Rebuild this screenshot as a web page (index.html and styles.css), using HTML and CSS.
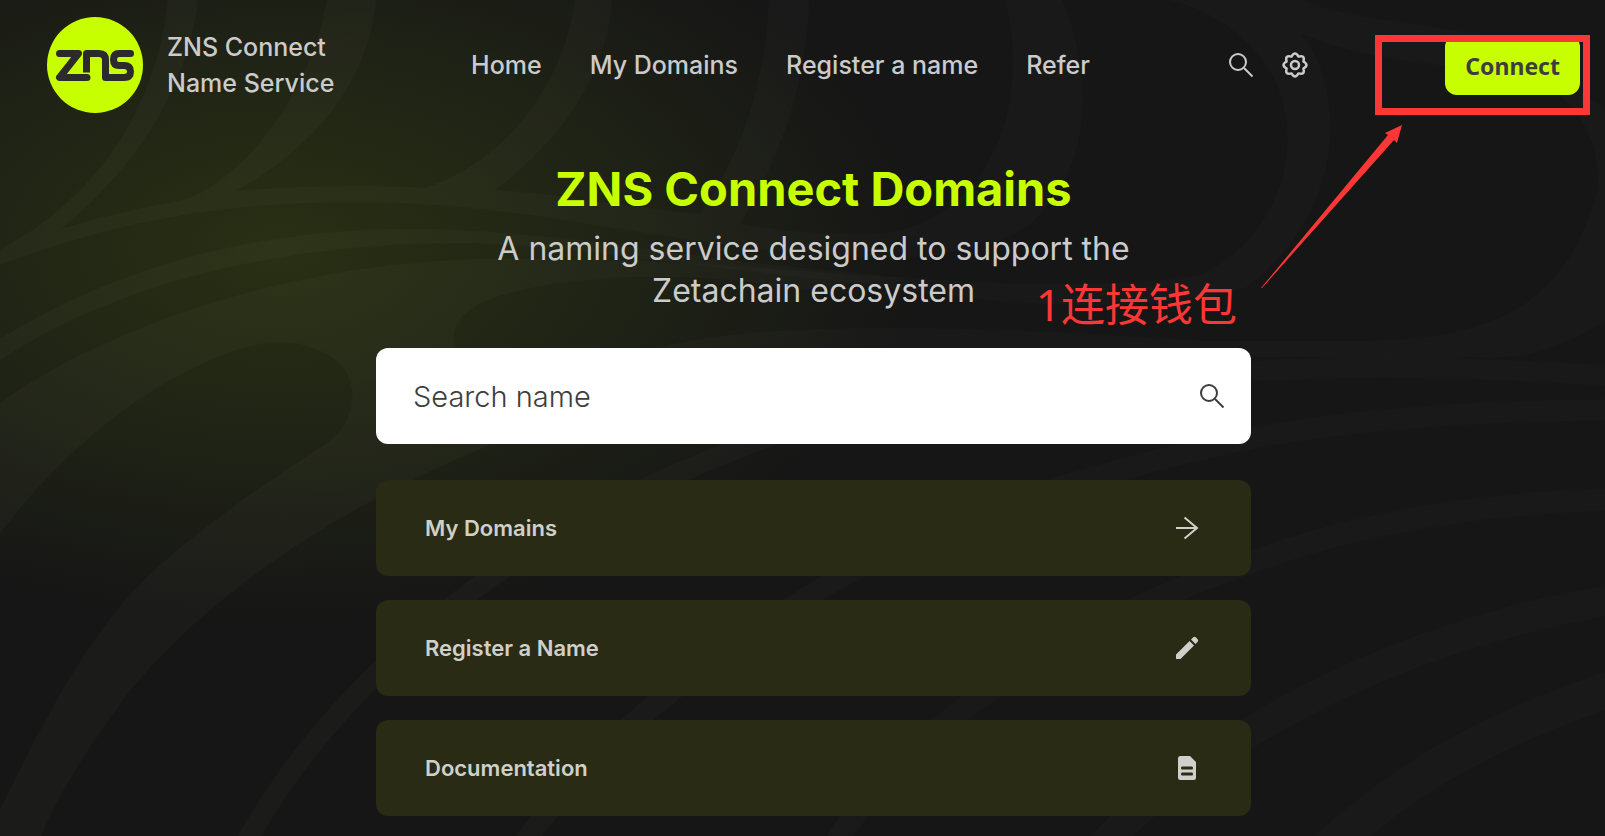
FILE: index.html
```html
<!DOCTYPE html>
<html lang="en">
<head>
  <meta charset="UTF-8">
  <meta name="viewport" content="width=device-width, initial-scale=1.0">
  <title>ZNS Connect Domains</title>
  <link rel="stylesheet" href="styles.css">
</head>
<body>
  <svg class="backdrop" viewBox="0 0 1605 836" preserveAspectRatio="xMidYMid slice" aria-hidden="true">
    <defs>
      <linearGradient id="fade" gradientUnits="userSpaceOnUse" x1="0" y1="0" x2="1605" y2="0">
        <stop offset="0" stop-color="#fff0d0" stop-opacity="0.024"/>
        <stop offset="0.3" stop-color="#fff0d0" stop-opacity="0.022"/>
        <stop offset="0.6" stop-color="#ffffff" stop-opacity="0.013"/>
        <stop offset="1" stop-color="#ffffff" stop-opacity="0.013"/>
      </linearGradient>
    </defs>
    <g fill="url(#fade)">
      <path d="M168 0C160 80 120 185 0 250V265C140 212 250 202 360 202C520 202 640 240 800 252C880 262 1000 262 1040 214C1090 160 1095 80 1062 0H1005C1030 90 1000 215 886 233C830 236 785 232 740 224C785 150 806 80 809 0H769C766 90 735 165 700 214C630 207 560 194 495 190C560 140 605 80 612 0H575C565 80 510 160 425 188C360 185 300 186 235 191C320 145 370 75 376 0H327C315 80 250 180 180 201C140 208 100 217 61 229C145 160 188 80 198 0Z"/>
      <path d="M0 403C110 325 300 259 500 259C700 259 800 272 900 278L800 290C700 270 560 272 485 301C450 316 448 344 460 350H640L700 400C600 402 540 425 490 445C360 498 220 580 128 693C90 745 60 790 41 836H0V810C35 740 70 665 128 597C175 545 255 490 327 443C360 420 360 375 332 357C300 338 270 338 230 352C140 385 60 455 0 533Z"/>
      <path d="M0 339C120 265 260 229 408 229C560 229 700 262 850 272C960 285 1110 290 1200 275C1280 240 1310 140 1270 70C1250 40 1215 10 1170 0H1300C1380 30 1480 20 1540 60L1605 110V320C1570 345 1530 356 1503 357C1400 360 1330 357 1252 357L1100 352H640C700 336 750 332 800 330C900 325 1050 330 1200 341H1365C1500 340 1570 300 1598 187C1600 130 1570 90 1520 75C1450 65 1360 60 1300 33C1345 85 1350 210 1245 288C1120 320 960 300 850 282C700 268 560 243 459 243C300 243 130 275 0 360Z"/>
    </g>
    <g fill="none" stroke="url(#fade)">
      <path stroke-width="20" d="M1620 377C1480 366 1360 366 1252 371C1000 375 900 390 760 440C600 500 480 570 377 673C320 730 280 780 238 856"/>
      <path stroke-width="21" d="M1620 410C1470 410 1350 420 1252 438C1080 475 940 520 822 588C690 670 590 745 515 856"/>
      <path stroke-width="22" d="M1620 499C1470 503 1350 525 1252 562C1080 620 900 725 828 856"/>
      <path stroke-width="30" d="M1620 598C1480 622 1360 665 1252 731C1190 765 1145 800 1092 856"/>
      <path stroke-width="36" d="M1620 686C1510 722 1410 770 1320 856"/>
    </g>
  </svg>

  <div class="page">
    <header class="header">
      <a class="brand" href="#">
        <svg class="logo" viewBox="0 0 96 96" aria-hidden="true">
          <circle cx="48" cy="48" r="48" fill="#c8ff00"/>
          <g fill="none" stroke="#2d2a2b" stroke-width="7" stroke-linecap="round" stroke-linejoin="round">
            <path d="M12.500 36.500H31.500L12.500 60.500H40"/>
            <path d="M39.500 55.500V36.500H52Q58.500 36.500 58.500 43V60.500H77Q83.500 60.500 83.500 54.500T77 48.500H72Q66.500 48.500 66.500 42.500T72 36.500H83.500" stroke-linecap="butt"/>
            <path d="M76 36.500H83.500"/>
          </g>
        </svg>
        <span>ZNS Connect<br>Name Service</span>
      </a>

      <nav class="nav">
        <a href="#">Home</a>
        <a href="#">My Domains</a>
        <a href="#">Register a name</a>
        <a href="#">Refer</a>
      </nav>

      <div class="tools">
        <button class="icon-button" aria-label="Search">
          <svg class="icon" viewBox="0 0 28 28"><circle cx="11" cy="11" r="8"/><path d="M17 17L25.500 25.500"/></svg>
        </button>
        <button class="icon-button" aria-label="Settings">
          <svg class="icon gear" viewBox="0 0 28 28">
            <circle cx="14" cy="14" r="4"/>
            <path d="M10.500 5.600Q14 -0.500 17.500 5.600Q24.300 3.700 22.400 10.500Q28.500 14 22.400 17.500Q24.300 24.300 17.500 22.400Q14 28.500 10.500 22.400Q3.700 24.300 5.600 17.500Q-0.500 14 5.600 10.500Q3.700 3.700 10.500 5.600Z" stroke-linejoin="round"/>
          </svg>
        </button>
      </div>

      <button class="connect">Connect</button>
    </header>

    <main class="main">
      <h1>ZNS Connect Domains</h1>
      <p class="subtitle">A naming service designed to support the Zetachain ecosystem</p>

      <form class="search">
        <input type="text" aria-label="Search name" placeholder="Search name">
        <button class="icon-button" type="button" aria-label="Search">
          <svg class="icon" viewBox="0 0 28 28"><circle cx="11" cy="11" r="8"/><path d="M17 17L25.500 25.500"/></svg>
        </button>
      </form>

      <div class="cards">
        <a class="card" href="#">
          My Domains
          <svg class="icon" viewBox="0 0 28 28"><path d="M3 14H24M11.500 3.500L24 14L11.500 24.500"/></svg>
        </a>
        <a class="card" href="#">
          Register a Name
          <svg class="icon solid" viewBox="0 0 28 28"><path d="M3 20.500L16.500 7L21 11.500L7.500 25H3ZM18 5.500L20 3.500Q21.500 2 23 3.500L24.500 5Q26 6.500 24.500 8L22.500 10Z"/></svg>
        </a>
        <a class="card" href="#">
          Documentation
          <svg class="icon solid" viewBox="0 0 28 28"><path fill-rule="evenodd" d="M7.500 2H17L23 8V23.500Q23 26 20.500 26H7.500Q5 26 5 23.500V4.500Q5 2 7.500 2ZM9 12.500Q8 12.500 8 14T9 15.500H19Q20 15.500 20 14T19 12.500ZM9 18.500Q8 18.500 8 20T9 21.500H19Q20 21.500 20 20T19 18.500Z"/></svg>
        </a>
      </div>
    </main>
  </div>

  <!-- step marker -->
  <div class="note-box"></div>
  <svg class="note-arrow" viewBox="0 0 142 164" aria-hidden="true">
    <path d="M0 163L127 10L124 8L141 0L136 18L133 15L1 163Z"/>
  </svg>
  <div class="note-text" lang="zh-CN">1连接钱包</div>
</body>
</html>
```
FILE: styles.css
```css
* {
  margin: 0;
  padding: 0;
  box-sizing: border-box;
}

body {
  min-height: 100vh;
  position: relative;
  overflow: hidden;
  font-family: 'Inter', sans-serif;
  background: radial-gradient(ellipse 640px 370px at 280px 250px, #293014, #212515 45%, #161616) #161616;
  color: #cbcbcb;
}

a {
  color: inherit;
  text-decoration: none;
}

button {
  border: none;
  background: none;
  color: inherit;
  cursor: pointer;
}

.backdrop {
  position: absolute;
  top: 0;
  left: 0;
  width: 100%;
  height: 100%;
}

.page {
  position: relative;
  padding: 17px 25px 20px 47px;
}

.header {
  display: flex;
  align-items: center;
  justify-content: space-between;
  font-size: 25px;
  font-weight: 500;
}

.brand {
  display: flex;
  align-items: center;
  gap: 24px;
  line-height: 36px;
}

.logo {
  width: 96px;
  height: 96px;
}

.nav {
  display: flex;
  gap: 48px;
}

.tools {
  display: flex;
  gap: 26px;
}

.icon-button {
  display: flex;
}

.icon {
  width: 28px;
  height: 28px;
  fill: none;
  stroke: currentColor;
  stroke-width: 2;
}

.icon.solid {
  fill: currentColor;
  stroke: none;
}

.icon.gear {
  stroke-width: 2.5;
}

.connect {
  padding: 13px 20px 11px;
  border-radius: 12px;
  background: #c8ff00;
  color: #3d3d3d;
  font: 700 23px/36px 'Noto Sans', sans-serif;
}

.main {
  max-width: 875px;
  margin: 40px auto 0;
  text-align: center;
}

h1 {
  color: #c8ff00;
  font-size: 47px;
  line-height: 72px;
}

.subtitle {
  max-width: 640px;
  margin: 3px auto 36px;
  font-size: 32px;
  line-height: 42px;
}

.search {
  display: flex;
  align-items: center;
  height: 96px;
  padding: 0 25px 0 37px;
  border-radius: 12px;
  background: #fff;
  color: #3d3d3d;
}

.search input {
  flex: 1;
  border: none;
  outline: none;
  background: none;
  color: inherit;
  font: 300 29px 'Inter', sans-serif;
}

.search input::placeholder {
  color: #3d3d3d;
}

.cards {
  display: grid;
  gap: 24px;
  margin-top: 36px;
}

.card {
  display: flex;
  align-items: center;
  justify-content: space-between;
  height: 96px;
  padding: 0 50px 0 49px;
  border-radius: 12px;
  background: #292b14;
  color: #d0d0ca;
  font-size: 22px;
  font-weight: 600;
}

.note-box {
  position: absolute;
  top: 35px;
  right: 15px;
  width: 215px;
  height: 80px;
  border: 7px solid #fd3735;
}

.note-arrow {
  position: absolute;
  top: 125px;
  right: 202px;
  width: 142px;
  height: 164px;
  fill: #fd3735;
}

.note-text {
  position: absolute;
  top: 282px;
  right: 368px;
  color: #fd3735;
  font: 44px/44px 'Noto Sans', 'Noto Sans CJK SC', sans-serif;
}
```
